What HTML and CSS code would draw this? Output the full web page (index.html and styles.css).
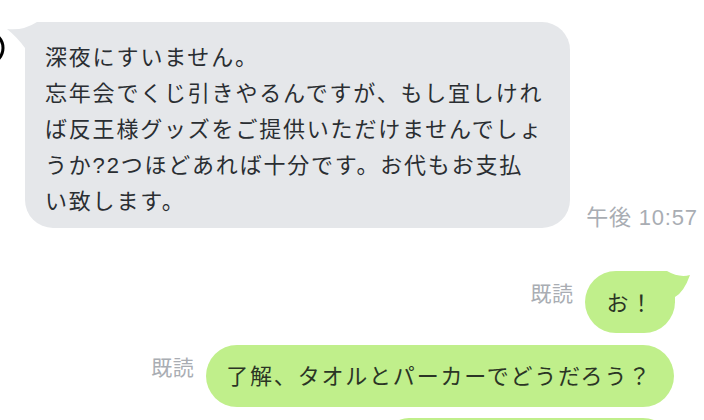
FILE: index.html
```html
<!DOCTYPE html>
<html lang="ja">
<head>
<meta charset="utf-8">
<title>chat</title>
<link rel="stylesheet" href="styles.css">
</head>
<body>
<div class="edge">
  <svg width="8" height="40" viewBox="0 0 8 40"><circle cx="-13" cy="20" r="16" fill="none" stroke="#000" stroke-width="3"/></svg>
</div>
<div class="chat">
  <div class="row in">
    <div class="bubble grey">
      <svg class="tail tail-left" width="50" height="32" viewBox="0 0 50 32"><path d="M0 7 Q16 9 30 0 L50 0 L50 32 L18 32 L18 26 Q10 15 0 7 Z" fill="#e5e7ea"/></svg>
      <p class="text">深夜にすいません。<br>忘年会でくじ引きやるんですが、もし宜しけれ<br>ば反王様グッズをご提供いただけませんでしょ<br>うか?2つほどあれば十分です。お代もお支払<br>い致します。</p>
    </div>
    <div class="time">午後 10:57</div>
  </div>

  <div class="row out first">
    <div class="read">既読</div>
    <div class="bubble green short">
      <svg class="tail tail-right" width="45" height="32" viewBox="0 0 45 32"><path d="M45 4 Q39 21 30 26 L30 32 L0 32 L0 0 L22 0 Q34 7 45 4 Z" fill="#c0ef8b"/></svg>
      <p class="text">お！</p>
    </div>
  </div>

  <div class="row out second">
    <div class="read">既読</div>
    <div class="bubble green wide">
      <p class="text">了解、タオルとパーカーでどうだろう？</p>
    </div>
  </div>

  <div class="row out third">
    <div class="bubble green empty"></div>
  </div>
</div>
</body>
</html>
```

FILE: styles.css
```css
html, body {
  margin: 0;
  padding: 0;
  background: #ffffff;
}

body {
  position: relative;
  height: 420px;
  overflow: hidden;
  font-family: "Liberation Sans", "Noto Sans CJK JP", sans-serif;
}

.edge {
  position: absolute;
  left: 0;
  top: 28px;
  width: 8px;
  height: 40px;
}

.edge svg {
  display: block;
}

.chat {
  display: flex;
  flex-direction: column;
  padding: 22px 29px 0 25px;
}

.row {
  display: flex;
  align-items: flex-end;
}

.row.out {
  justify-content: flex-end;
  align-items: flex-start;
}

.row.first {
  margin-top: 43px;
}

.row.second {
  margin-top: 12px;
  margin-right: 1px;
}

.row.third {
  margin-top: 11px;
  margin-right: 1px;
}

.bubble {
  position: relative;
  box-sizing: border-box;
}

.text {
  margin: 0;
  font-size: 22px;
  line-height: 36px;
  letter-spacing: 1.8px;
  white-space: nowrap;
  position: relative;
}

.grey {
  background: #e5e7ea;
  border-radius: 28px;
  padding: 18px 27px 8px 20px;
  color: #2a2e32;
}

.green {
  background: #c0ef8b;
  border-radius: 31px;
  height: 62px;
  padding: 14px 20px 12px 20px;
  color: #2b3525;
}

.green.short {
  padding: 15px 21px 11px 21px;
}

.green.wide {
  padding: 14px 22px 12px 20px;
}

.green.empty {
  width: 289px;
  border-radius: 24px 31px 31px 31px;
}

.tail {
  position: absolute;
  top: 0;
  display: block;
}

.tail-left {
  left: -18px;
}

.tail-right {
  right: -15px;
}

.time {
  margin-left: 16px;
  margin-bottom: -2px;
  font-size: 22px;
  line-height: 24px;
  letter-spacing: 0.8px;
  color: #a9adb3;
  white-space: nowrap;
}

.read {
  margin-top: 11px;
  margin-right: 12px;
  font-size: 21px;
  line-height: 24px;
  letter-spacing: 0.5px;
  color: #a9adb3;
  white-space: nowrap;
}
```
